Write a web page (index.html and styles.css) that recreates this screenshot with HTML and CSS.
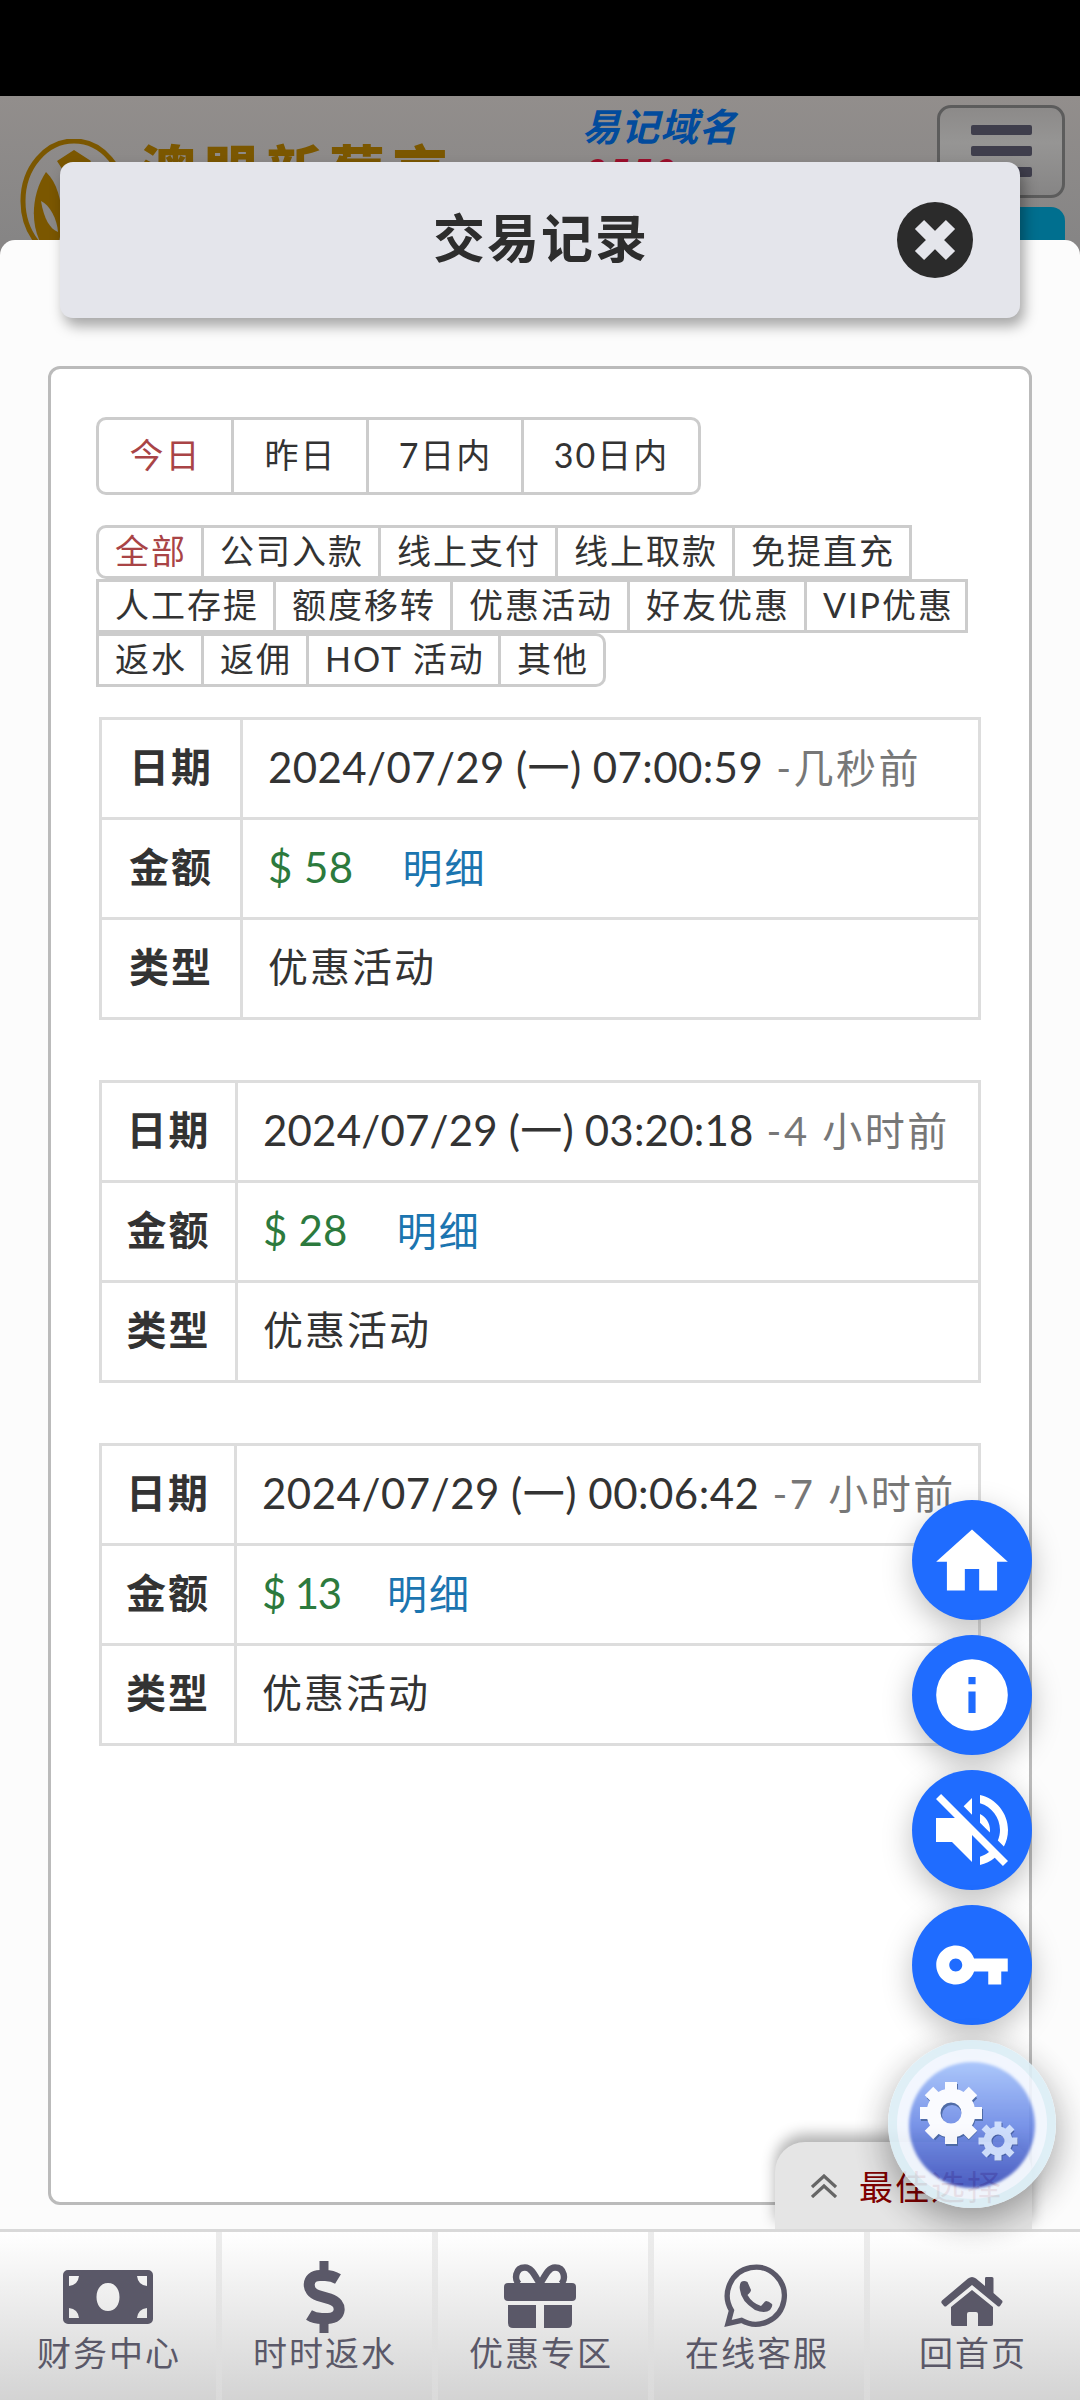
FILE: index.html
```html
<!DOCTYPE html>
<html lang="zh-CN">
<head>
  <meta charset="UTF-8">
  <meta name="viewport" content="width=device-width, initial-scale=1.0">
  <title>交易记录</title>
  <link rel="stylesheet" href="styles.css">
</head>
<body>
  <div class="status-bar"></div>

  <!-- Site header, dimmed behind the dialog -->
  <header class="site-header">
    <div class="logo">
      <svg class="logo-mark" viewBox="0 0 108 124" width="108" height="124">
        <ellipse cx="54" cy="62" rx="51" ry="60" fill="none" stroke="#7b5700" stroke-width="5"/>
        <path d="M26 33C8 60 10 100 32 118C46 98 46 52 26 33Z" fill="#7b5700"/>
        <path d="M21 62C24 80 30 90 38 93C37 80 30 66 21 62Z" fill="#8b8988"/>
        <path d="M54 11L37 22L46 36L54 30L62 36L71 22Z" fill="#7b5700"/>
      </svg>
      <span class="logo-text">澳盟新葡京</span>
    </div>
    <div class="domain">
      <div class="domain-title">易记域名</div>
      <div class="domain-num">9559</div>
    </div>
    <div class="header-right">
      <div class="menu-btn"><i></i><i></i><i></i></div>
      <div class="login-btn"></div>
    </div>
  </header>

  <!-- Dialog -->
  <main class="dialog">
    <div class="dialog-title">
      <h1>交易记录</h1>
      <svg class="close" viewBox="0 0 76 76" width="76" height="76">
        <circle cx="38" cy="38" r="38" fill="#2b2b2b"/>
        <path d="M22.500 22.500L53.500 53.500M53.500 22.500L22.500 53.500" stroke="#e4e5eb" stroke-width="13"/>
      </svg>
    </div>

    <section class="records">
      <div class="range">
        <span class="w138 active">今日</span><span class="w135">昨日</span><span class="w155">7日内</span><span class="w177">30日内</span>
      </div>

      <div class="types">
        <div class="type-row">
          <span class="active first">全部</span><span>公司入款</span><span>线上支付</span><span>线上取款</span><span>免提直充</span>
        </div>
        <div class="type-row">
          <span>人工存提</span><span>额度移转</span><span>优惠活动</span><span>好友优惠</span><span class="w161">VIP优惠</span>
        </div>
        <div class="type-row">
          <span>返水</span><span>返佣</span><span class="w192">HOT 活动</span><span class="last">其他</span>
        </div>
      </div>

      <table class="record r1">
        <tr><th>日期</th><td><b class="num">2024/07/29 (一) 07:00:59</b><em>-几秒前</em></td></tr>
        <tr><th>金额</th><td><b class="num money">$ 58</b><a>明细</a></td></tr>
        <tr><th>类型</th><td>优惠活动</td></tr>
      </table>

      <table class="record r2">
        <tr><th>日期</th><td><b class="num">2024/07/29 (一) 03:20:18</b><em>-4 小时前</em></td></tr>
        <tr><th>金额</th><td><b class="num money">$ 28</b><a>明细</a></td></tr>
        <tr><th>类型</th><td>优惠活动</td></tr>
      </table>

      <table class="record r3">
        <tr><th>日期</th><td><b class="num">2024/07/29 (一) 00:06:42</b><em>-7 小时前</em></td></tr>
        <tr><th>金额</th><td><b class="num money">$ 13</b><a>明细</a></td></tr>
        <tr><th>类型</th><td>优惠活动</td></tr>
      </table>
    </section>

    <div class="best">
      <svg viewBox="0 0 26 24" width="26" height="24" fill="none" stroke="#666" stroke-width="3.2">
        <path d="M1 13L13 2L25 13M1 23L13 12L25 23"/>
      </svg>
      <span>最佳选择</span>
    </div>
  </main>

  <!-- Bottom navigation -->
  <nav class="tabbar">
    <div class="tab">
      <svg viewBox="0 0 90 54" width="90" height="54">
        <path fill="#5a5868" fill-rule="evenodd" d="M5 0H85A5 5 0 0 1 90 5V49A5 5 0 0 1 85 54H5A5 5 0 0 1 0 49V5A5 5 0 0 1 5 0ZM6 6V16Q15 15 16 6ZM84 6H74Q75 15 84 16ZM6 48H16Q15 39 6 38ZM84 48V38Q75 39 74 48ZM45 13C38 13 33.500 19 33.500 27S38 41 45 41S56.500 35 56.500 27S52 13 45 13Z"/>
      </svg>
      <span>财务中心</span>
    </div>
    <div class="tab">
      <svg class="dollar" viewBox="0 0 48 72" width="48" height="72" fill="none" stroke="#5a5868">
        <path stroke-width="9" stroke-linecap="butt" d="M24 0V14M24 58V72"/>
        <path stroke-width="11" d="M38 18C34 15.500 30 14.500 25 14.500H20C6 14.500 6 31 18 34.500L30 38C43 42 42 57 28 57.500H22C17 57.500 13 56.500 9 54"/>
      </svg>
      <span>时时返水</span>
    </div>
    <div class="tab">
      <svg class="gift" viewBox="0 0 72 64" width="72" height="64" fill="#5a5868">
        <path fill="none" stroke="#5a5868" stroke-width="6.500" d="M36 20C30 10 27 3.500 21 3.500C11 3.500 10 16 15 20M36 20C42 10 45 3.500 51 3.500C61 3.500 62 16 57 20"/>
        <rect x="0" y="19" width="72" height="18" rx="4"/>
        <path d="M4 41H32V64H9Q4 64 4 59ZM40 41H68V59Q68 64 63 64H40Z"/>
      </svg>
      <span>优惠专区</span>
    </div>
    <div class="tab">
      <svg class="phone" viewBox="0 0 64 64" width="64" height="64">
        <path fill="none" stroke="#5a5868" stroke-width="5.300" d="M4 59.500L7.500 46.500A28.500 28.500 0 1 1 17.500 56.300Z"/>
        <path fill="#5a5868" d="M17 18Q20 16 23.500 18L27 26Q27 28 23.500 31Q28 39 37 42L41 37.500Q43 36 48 40Q49 42 46 46Q41 50 31 46Q17 37 16 26Q15 21 17 18Z"/>
      </svg>
      <span>在线客服</span>
    </div>
    <div class="tab">
      <svg class="house" viewBox="0 0 62 50" width="62" height="50" fill="#5a5868">
        <path d="M31 0Q33 0 35 1.500L44 9V1Q44 0 45.500 0H51Q52.500 0 52.500 1.500V16L61 23.500Q62 24.500 61 26L59 29Q57.500 30 56.500 29L31 8L5.500 29Q4.500 30 3 29L.5 26Q0 24.500 1 23.500L27 1.500Q29 0 31 0Z"/>
        <path d="M31 13L52 30V47Q52 49 50 49H37V37Q37 35 35 35H28Q26 35 26 37V49H12Q10 49 10 47V30Z"/>
      </svg>
      <span>回首页</span>
    </div>
  </nav>

  <!-- Floating buttons -->
  <div class="fabs">
    <div class="fab">
      <svg viewBox="0 0 24 24" width="86" height="86"><path transform="translate(0 .5)" d="M10 20v-6h4v6h5v-8h3L12 3 2 12h3v8z"/></svg>
    </div>
    <div class="fab">
      <svg viewBox="0 0 24 24" width="86" height="86"><path d="M13 9h-2V7h2m0 10h-2v-6h2m-1-9A10 10 0 0 0 2 12a10 10 0 0 0 10 10 10 10 0 0 0 10-10A10 10 0 0 0 12 2z"/></svg>
    </div>
    <div class="fab">
      <svg viewBox="0 0 24 24" width="96" height="96"><path d="M16.500 12c0-1.770-1.020-3.290-2.500-4.030v2.210l2.450 2.450c.03-.2.050-.41.050-.63zm2.500 0c0 .94-.2 1.820-.54 2.640l1.510 1.510C20.630 14.910 21 13.500 21 12c0-4.280-2.990-7.860-7-8.770v2.060c2.890.86 5 3.540 5 6.710zM4.270 3L3 4.270 7.730 9H3v6h4l5 5v-6.730l4.250 4.250c-.67.52-1.420.93-2.250 1.180v2.060c1.380-.31 2.630-.95 3.690-1.810L19.730 21 21 19.730l-9-9L4.270 3zM12 4L9.910 6.090 12 8.180V4z"/></svg>
    </div>
    <div class="fab">
      <svg viewBox="0 0 24 24" width="78" height="78"><path d="M12.650 10C11.830 7.670 9.610 6 7 6c-3.310 0-6 2.690-6 6s2.690 6 6 6c2.610 0 4.830-1.670 5.650-4H17v4h4v-4h2v-4H12.650zM7 14c-1.100 0-2-.9-2-2s.9-2 2-2 2 .9 2 2-.9 2-2 2z"/></svg>
    </div>
    <div class="fab-main">
      <svg viewBox="0 0 168 168" width="168" height="168">
        <defs>
          <linearGradient id="ball" x1="0" y1="0" x2="0" y2="1">
            <stop offset="0" stop-color="#a4c2fb"/>
            <stop offset=".5" stop-color="#6c8ae6"/>
            <stop offset="1" stop-color="#3c50bd"/>
          </linearGradient>
          <linearGradient id="small" x1="0" y1="0" x2="0" y2="1">
            <stop offset="0" stop-color="#e4ecff"/>
            <stop offset="1" stop-color="#9fbdf8"/>
          </linearGradient>
          <filter id="soft"><feGaussianBlur stdDeviation="1.500"/></filter>
        </defs>
        <circle cx="84" cy="84" r="84" fill="#dceef6"/>
        <circle cx="84" cy="84" r="75" fill="#f1f6fe"/>
        <circle cx="84" cy="85" r="63" fill="url(#ball)" filter="url(#soft)"/>
        <g transform="translate(64 75)" fill="none" stroke="#3f5e9f">
          <circle r="17" stroke-width="14"/>
          <path stroke-width="12" d="M0-31V-21M0 21V31M-31 0H-21M21 0H31M-21-21L-15-15M15 15L21 21M21-21L15-15M-15 15L-21 21"/>
        </g>
        <g transform="translate(63 73)" fill="none" stroke="#fafbff">
          <circle r="17.500" stroke-width="14"/>
          <path stroke-width="12" d="M0-31V-21M0 21V31M-31 0H-21M21 0H31M-22-22L-15-15M15 15L22 22M22-22L15-15M-15 15L-22 22"/>
        </g>
        <g transform="translate(111 102)" fill="none" stroke="#3a559f">
          <circle r="10.500" stroke-width="8"/>
          <path stroke-width="7" d="M0-19V-13M0 13V19M-19 0H-13M13 0H19M-13-13L-9-9M9 9L13 13M13-13L9-9M-9 9L-13 13"/>
        </g>
        <g transform="translate(110 101)" fill="none" stroke="#cbdcfd">
          <circle r="10.500" stroke-width="8"/>
          <path stroke-width="7" d="M0-19.500V-13M0 13V19.500M-19.500 0H-13M13 0H19.500M-14-14L-9-9M9 9L14 14M14-14L9-9M-9 9L-14 14"/>
        </g>
      </svg>
    </div>
  </div>
</body>
</html>
```

FILE: styles.css
```css
* { box-sizing: border-box; margin: 0; padding: 0; }

body {
  position: relative;
  display: flex;
  flex-direction: column;
  width: 1080px;
  height: 2400px;
  overflow: hidden;
  background: #888686;
  color: #333;
  font-family: Lato, "Noto Sans CJK SC", sans-serif;
  font-size: 34px;
  letter-spacing: 2px;
}

svg { display: block; flex: none; }

.status-bar { height: 96px; background: #000; }

/* HEADER */
.site-header {
  display: flex;
  height: 144px;
  background: linear-gradient(#928e8c, #868585);
}
.logo {
  display: flex;
  width: 582px;
  height: 144px;
  padding: 43px 0 0 20px;
  overflow: hidden;
}
.logo-text {
  margin-left: 12px;
  color: #7b5700;
  font-size: 56px;
  font-weight: 900;
  line-height: 64px;
  letter-spacing: 7px;
}
.domain {
  width: 355px;
  height: 144px;
  padding-top: 5px;
  overflow: hidden;
  font-size: 38px;
  font-weight: bold;
  font-style: italic;
  letter-spacing: 1px;
}
.domain-title { line-height: 50px; color: #024b9c; }
.domain-num { line-height: 42px; padding-left: 3px; color: #9c0f2c; }
.header-right { width: 128px; padding-top: 9px; }
.menu-btn {
  display: flex;
  flex-direction: column;
  align-items: center;
  gap: 11px;
  height: 93px;
  padding-top: 17px;
  border: 3px solid #5c5c5c;
  border-radius: 14px;
  background: linear-gradient(#8c8a89, #969594 40%, #868585);
}
.menu-btn i { width: 61px; height: 10px; border-radius: 2px; background: #3f3e4c; }
.login-btn { height: 33px; margin-top: 9px; border-radius: 14px 14px 0 0; background: #006f8f; }

/* DIALOG */
.dialog {
  position: relative;
  flex: 1;
  padding: 126px 48px 24px;
  border-radius: 15px 15px 0 0;
  background: #fcfcfc;
}
.dialog-title {
  position: absolute;
  left: 60px;
  top: -78px;
  display: flex;
  align-items: center;
  justify-content: center;
  width: 960px;
  height: 156px;
  border-radius: 13px;
  background: #e4e5eb;
  box-shadow: 4px 8px 14px rgba(0,0,0,0.35);
}
.dialog-title h1 {
  padding: 0 0 5px 2px;
  color: #2d2d2d;
  font-size: 52px;
  letter-spacing: 2px;
  line-height: 80px;
}
.dialog-title .close { position: absolute; right: 47px; top: 40px; }

.records {
  height: 1839px;
  padding: 48px 45px;
  border: 3px solid #bbb;
  border-radius: 12px;
  background: #fff;
}

/* FILTERS */
.range { display: flex; height: 78px; }
.range span {
  border: 3px solid #ccc;
  border-left: 0;
  line-height: 70px;
  padding-left: 1px;
  text-align: center;
}
.range span:first-child { border-left: 3px solid #ccc; border-radius: 10px 0 0 10px; }
.range span:last-child { border-radius: 0 10px 10px 0; }
.active { color: #a94446; }
.w138 { width: 138px; }
.w135 { width: 135px; }
.w155 { width: 155px; }
.w177 { width: 177px; }

.types { margin: 30px 0; }
.type-row { display: flex; height: 54px; }
.type-row span {
  padding: 0 14px 0 16px;
  border: 3px solid #ccc;
  border-left: 0;
  line-height: 46px;
  white-space: nowrap;
}
.type-row span:first-child { border-left: 3px solid #ccc; }
.type-row .first { border-radius: 10px 0 0 10px; }
.type-row .last { border-radius: 0 10px 10px 0; }
.type-row .w161 { width: 161px; }
.type-row .w192 { width: 192px; }

/* RECORD TABLES */
.record {
  width: 882px;
  margin: 0 0 60px 3px;
  border-collapse: collapse;
  table-layout: fixed;
  font-size: 40px;
}
.record th, .record td {
  height: 100px;
  border: 3px solid #ddd;
  line-height: 56px;
  padding-bottom: 3px;
  white-space: nowrap;
}
.record td { padding-left: 25px; }
.num { font-weight: normal; font-size: 42px; letter-spacing: 0; }
.money { margin-right: 49px; color: #2c7a3d; }
.record em { margin-left: 13px; color: #777; font-style: normal; letter-spacing: 2.5px; }
.record a { color: #1b75b0; }

.r1 th { width: 141px; }
.r1 .num { letter-spacing: 0.4px; }
.r2 th { width: 136px; }
.r2 .num { letter-spacing: 0.2px; }
.r3 th { width: 135px; }
.r3 .num { letter-spacing: 0.5px; }
.r3 .money { margin-right: 46px; letter-spacing: -1.2px; }

.best {
  position: absolute;
  right: 48px;
  bottom: 0;
  display: flex;
  align-items: center;
  gap: 22px;
  width: 257px;
  height: 87px;
  padding: 0 0 0 36px;
  border-radius: 30px 30px 0 0;
  background: #e5e5e5;
  box-shadow: 0 -8px 14px rgba(0,0,0,0.3);
  color: #800000;
}

/* BOTTOM NAV */
.tabbar {
  position: relative;
  display: flex;
  height: 171px;
  border-top: 3px solid #d9d9d9;
  background: linear-gradient(#fff, #d3d3d3);
}
.tab {
  display: flex;
  flex-direction: column;
  align-items: center;
  justify-content: flex-end;
  width: 216px;
  padding-bottom: 22px;
  color: #5a5868;
}
.tab + .tab { background: linear-gradient(#ececec, #dadada) left / 6px 100% no-repeat; }
.tab span { line-height: 50px; margin-right: -2px; }
.tab svg { margin-bottom: 4px; }
.tab .dollar { margin-bottom: -5px; }
.tab .gift, .tab .phone { margin-bottom: 0; }
.tab .house { margin-bottom: 1px; }

/* FLOATING BUTTONS */
.fabs {
  position: absolute;
  left: 888px;
  top: 1500px;
  display: flex;
  flex-direction: column;
  align-items: center;
  gap: 15px;
}
.fab {
  display: flex;
  align-items: center;
  justify-content: center;
  width: 120px;
  height: 120px;
  border-radius: 50%;
  background: #1f6cff;
  box-shadow: 0 10px 30px rgba(0,0,0,0.25);
  fill: #fff;
}
.fab-main {
  width: 168px;
  height: 168px;
  border-radius: 50%;
  box-shadow: 0 12px 36px rgba(0,0,0,0.4);
  opacity: 0.91;
}
```
